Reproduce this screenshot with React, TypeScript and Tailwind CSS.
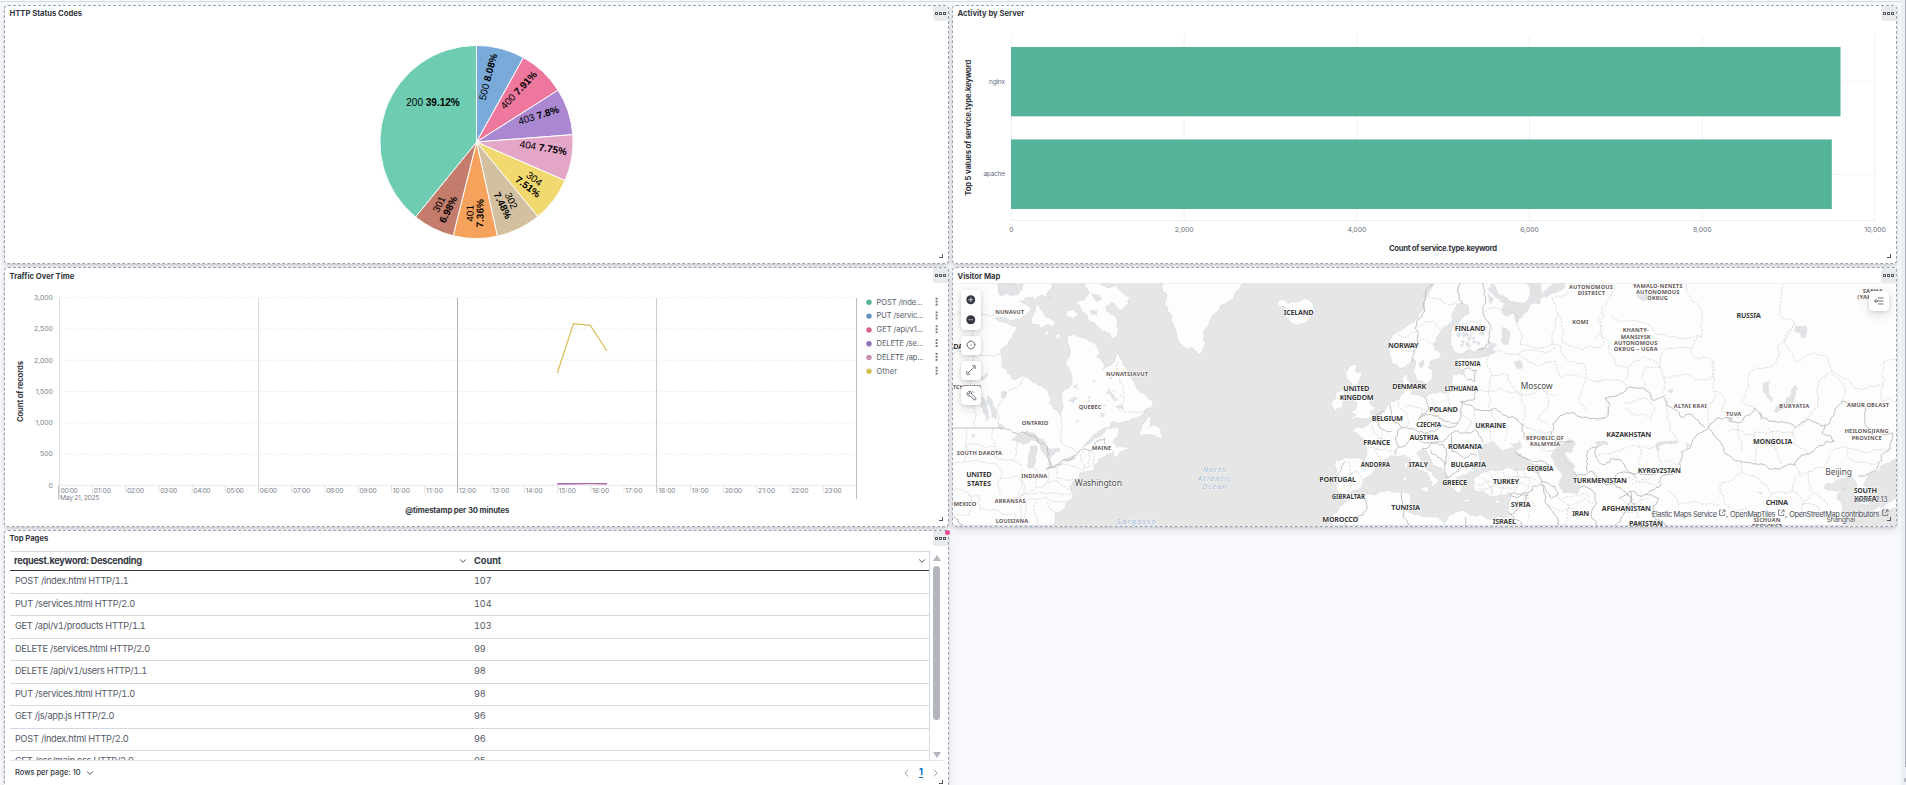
import React from 'react';

type Pt = [number, number];

/* ---------- geometry helpers ---------- */

function parse(s: string): Pt[] {
  return s.trim().split(/\s+/).map((p) => p.split(',').map(Number) as Pt);
}

const TOP = 55;
const BOTTOM = 780;
const LEFT = 23;
const RIGHT = 2855;

// Segments that run along the frame of the map stay straight.
function onFrame([x1, y1]: Pt, [x2, y2]: Pt): boolean {
  return (y1 <= TOP && y2 <= TOP) || (y1 >= BOTTOM && y2 >= BOTTOM) || (x1 <= LEFT && x2 <= LEFT) || (x1 >= RIGHT && x2 >= RIGHT);
}

// Subdivides a polyline with small deterministic offsets, for natural-looking coasts and borders.
function rough(s: string, dx = 0, amp = 0.16, closed = false): string {
  let pts = parse(s).map(([x, y]) => [x + dx, y] as Pt);
  if (closed) pts.push(pts[0]);
  for (let pass = 0; pass < 3; pass++) {
    const out: Pt[] = [];
    for (let i = 0; i < pts.length - 1; i++) {
      const [x1, y1] = pts[i];
      const [x2, y2] = pts[i + 1];
      out.push([x1, y1]);
      const len = Math.hypot(x2 - x1, y2 - y1);
      if (len < 7 || onFrame(pts[i], pts[i + 1])) continue;
      const n = Math.sin(x1 * 12.9898 + y1 * 78.233 + i * 3.7) * 43758.5453;
      const r = ((n - Math.floor(n) - 0.5) * 2 * amp * Math.min(len, 60)) / len;
      out.push([(x1 + x2) / 2 - (y2 - y1) * r, (y1 + y2) / 2 + (x2 - x1) * r]);
    }
    out.push(pts[pts.length - 1]);
    pts = out;
  }
  return 'M' + pts.map(([x, y]) => `${x.toFixed(1)} ${y.toFixed(1)}`).join('L') + (closed ? 'Z' : '');
}

/* ---------- panel shell ---------- */

function Panel({ title, dot, low, children }: { title: string; dot?: boolean; low?: boolean; children: React.ReactNode }) {
  return (
    <section className="relative flex flex-col rounded-[4px] border border-dashed border-[#98a2b3] bg-white shadow-[0_1px_2px_rgba(0,0,0,0.08),0_2px_4px_rgba(0,0,0,0.06),0_5px_9px_rgba(0,0,0,0.07)]">
      <header className="flex h-[15px] shrink-0 items-start justify-between">
        <h2 className={`pl-[4.5px] text-[7.65px] leading-[11px] font-bold text-[#343741] ${low ? 'pt-[3px]' : 'pt-[2px]'}`}>{title}</h2>
        <button className="flex h-[15px] w-[15px] items-center justify-center gap-px rounded-bl-[3px] bg-[#e9eaec]">
          {[0, 1, 2].map((i) => (
            <span key={i} className="h-[3px] w-[3px] border border-[#5a5d66]" />
          ))}
        </button>
      </header>
      <div className="min-h-0 flex-1">{children}</div>
      <span className="absolute right-[5px] bottom-[5px] h-1 w-1 border-r border-b border-[#515661]" />
      {dot && <span className="absolute -top-[1px] -right-[2px] h-[5px] w-[5px] rounded-full bg-[#f04e98]" />}
    </section>
  );
}

/* ---------- pie ---------- */

const slices = [
  { v: 8.08, c: '#79aad9' },
  { v: 7.91, c: '#ee789d' },
  { v: 7.8, c: '#a987d1' },
  { v: 7.75, c: '#e4a6c7' },
  { v: 7.51, c: '#f1d86f' },
  { v: 7.48, c: '#d2c0a0' },
  { v: 7.36, c: '#f5a35c' },
  { v: 6.98, c: '#c47c6c' },
  { v: 39.12, c: '#6dccb1' },
];

const pieLabels: { x: number; y: number; r: number; n?: string; b?: string }[] = [
  { x: 433, y: 102.5, r: 0, n: '200', b: '39.12%' },
  { x: 488, y: 76.8, r: -75.5, n: '500', b: '8.08%' },
  { x: 518.7, y: 90, r: -46.7, n: '400', b: '7.91%' },
  { x: 538.5, y: 115.3, r: -17.5, n: '403', b: '7.8%' },
  { x: 543.3, y: 147.7, r: 9.6, n: '404', b: '7.75%' },
  { x: 534.3, y: 178.7, r: 37, n: '304' },
  { x: 528, y: 186.7, r: 37, b: '7.51%' },
  { x: 511.3, y: 200.7, r: 64, n: '302' },
  { x: 502.7, y: 205.5, r: 64, b: '7.48%' },
  { x: 470, y: 213.3, r: -89.2, n: '401' },
  { x: 480, y: 213.3, r: -89.2, b: '7.36%' },
  { x: 439, y: 204.3, r: -63.4, n: '301' },
  { x: 448.3, y: 209.5, r: -63.4, b: '6.98%' },
];

function Pie() {
  const cx = 476.5;
  const cy = 142;
  const R = 96.6;
  let acc = 0;
  return (
    <svg viewBox="5 21 943 242" className="block h-[242px] w-[943px] font-['Liberation_Sans',sans-serif]">
      {slices.map((s) => {
        const a = (acc / 100) * Math.PI * 2;
        acc += s.v;
        const b = (acc / 100) * Math.PI * 2;
        return (
          <path
            key={s.c}
            fill={s.c}
            stroke="#fff"
            strokeWidth="1"
            d={`M${cx} ${cy}L${cx + R * Math.sin(a)} ${cy - R * Math.cos(a)}A${R} ${R} 0 0 1 ${cx + R * Math.sin(b)} ${cy - R * Math.cos(b)}Z`}
          />
        );
      })}
      {pieLabels.map((l, i) => (
        <text key={i} transform={`translate(${l.x} ${l.y}) rotate(${l.r})`} y="3.5" fontSize="10" textAnchor="middle" fill="#000">
          {l.n}
          {l.n && l.b ? ' ' : ''}
          {l.b && <tspan fontWeight="700">{l.b}</tspan>}
        </text>
      ))}
    </svg>
  );
}

/* ---------- bar chart ---------- */

function Bars() {
  const x0 = 1011.4;
  const step = 172.72;
  return (
    <svg viewBox="953 21 943 242" className="block h-[242px] w-[943px] font-['Inter',sans-serif]">
      {[0, 1, 2, 3, 4, 5].map((i) => (
        <path key={i} d={`M${x0 + i * step} 35V220.5`} stroke="#edf0f5" strokeWidth="1" />
      ))}
      <path d={`M${x0} 220.4H1875`} stroke="#eaedf3" />
      <path d="M1840 81.5H1875M1832 174.5H1875" stroke="#f0f1f4" strokeDasharray="3 2" />
      <rect x="1011" y="47" width="829.5" height="69.3" fill="#54b399" />
      <rect x="1011" y="139.4" width="820.8" height="69.6" fill="#54b399" />
      <g fontSize="6.8" fill="#69707d">
        {['0', '2,000', '4,000', '6,000', '8,000', '10,000'].map((t, i) => (
          <text key={t} x={x0 + i * step} y="232.2" textAnchor="middle">
            {t}
          </text>
        ))}
        <text x="1005" y="83.6" textAnchor="end" fontSize="6.5" textLength="16">nginx</text>
        <text x="1005" y="176.2" textAnchor="end" fontSize="6.5" textLength="21.6">apache</text>
      </g>
      <g fontSize="7.7" fontWeight="700" fill="#343741">
        <text x="1443" y="250.8" textAnchor="middle" textLength="108">Count of service.type.keyword</text>
        <text transform="translate(971 127.7) rotate(-90)" textAnchor="middle" textLength="136">Top 5 values of service.type.keyword</text>
      </g>
    </svg>
  );
}

/* ---------- line chart ---------- */

const legend: [string, string, number][] = [
  ['POST /inde…', '#54b399', 45.8],
  ['PUT /servic…', '#6092c0', 47],
  ['GET /api/v1…', '#d36086', 46.6],
  ['DELETE /se…', '#9170b8', 46.6],
  ['DELETE /ap…', '#ca8eae', 47.2],
  ['Other', '#d6bf57', 20.4],
];

function Lines() {
  const x0 = 59.3;
  const hour = 33.217;
  const rows = ['3,000', '2,500', '2,000', '1,500', '1,000', '500', '0'];
  return (
    <svg viewBox="5 283 943 243" className="block h-[243px] w-[943px] font-['Inter',sans-serif]">
      {rows.map((t, i) => {
        const y = 297.8 + i * 31.25;
        return (
          <g key={t}>
            <path d={`M${x0} ${y}H856`} stroke={i === 6 ? '#e8ebf2' : '#eeeff2'} strokeDasharray={i === 6 ? undefined : '3 2'} />
            <text x="52.8" y={y + 2.4} fontSize="6.8" textAnchor="end" fill="#7b818d">{t}</text>
          </g>
        );
      })}
      {Array.from({ length: 24 }, (_, h) => (
        <g key={h}>
          <path d={`M${x0 + h * hour} 485.5V493`} stroke="#d9dce1" strokeWidth="0.8" />
          <text x={x0 + h * hour + 1.2} y="492.8" fontSize="6.7" textLength="17.2" fill="#7b818d">
            {String(h).padStart(2, '0') + ':00'}
          </text>
        </g>
      ))}
      <text x="60" y="499.9" fontSize="6.7" textLength="39.3" fill="#7b818d">May 21, 2025</text>
      <path d="M58.7 485.5V499.5" stroke="#9a9da3" strokeWidth="0.8" />
      <path d="M59.5 298V485" stroke="#dedede" />
      <path d="M258.5 298V493" stroke="#dcdcdc" />
      <path d="M457.5 298V493" stroke="#acacac" strokeWidth="0.9" />
      <path d="M656.5 298V493" stroke="#cccccc" />
      <path d="M856.5 298V499.3" stroke="#bcbcbc" />
      <path d="M557.3 373L573.5 323.6L590.3 325.3L607 351" fill="none" stroke="#d6bf57" strokeWidth="1.2" />
      <path d="M557.3 483.7H607" stroke="#9170b8" strokeWidth="1.3" />
      <path d="M557.3 484.5L573 484.2L590 483.4L607 484.3" fill="none" stroke="#d36086" strokeWidth="0.7" opacity="0.8" />
      <g fontSize="7.7" fontWeight="700" fill="#343741">
        <text x="457.3" y="513.2" textAnchor="middle" textLength="104">@timestamp per 30 minutes</text>
        <text transform="translate(22.8 391.5) rotate(-90)" textAnchor="middle" textLength="61">Count of records</text>
      </g>
      {legend.map(([t, c, w], i) => {
        const y = 302.3 + i * 13.8;
        return (
          <g key={t}>
            <circle cx="869" cy={y} r="2.7" fill={c} />
            <text x="876.6" y={y + 2.2} fontSize="7.5" textLength={w} fill="#535966">{t}</text>
            {[-3, 0, 3].map((d) => (
              <rect key={d} x="935.6" y={y + d - 1.6} width="2" height="1.9" fill="#767b85" />
            ))}
          </g>
        );
      })}
    </svg>
  );
}

/* ---------- map ---------- */

const E = 990; // offset of the European sheet
const A = 1950; // offset of the Asian sheet

const land: [string, number][] = [
  ['23,55 160,55 165,92 172,75 205,55 218,88 232,75 240,55 323,55 318,72 305,85 318,98 290,92 270,105 245,98 222,110 252,125 262,135 245,150 228,160 180,160 150,160 180,172 213,184 213,200 190,235 168,262 170,300 195,330 212,345 240,335 262,352 300,372 312,385 313,415 325,432 345,450 356,425 348,395 350,382 382,352 378,325 362,300 372,275 374,250 366,215 385,208 410,220 430,228 455,242 464,265 455,275 470,290 475,315 500,300 520,262 530,285 545,310 560,340 575,372 600,385 620,405 620,430 590,452 550,470 505,470 470,495 440,520 415,548 450,518 480,495 520,490 518,515 505,532 515,548 535,548 555,548 530,560 515,578 505,572 505,560 480,575 460,585 445,605 450,612 430,620 405,625 385,650 375,665 385,690 365,715 330,745 325,782 23,782', 0],
  ['615,445 600,470 590,490 585,515 615,512 640,520 655,518 645,490 625,480 612,487 618,465', 0],
  ['272,125 285,115 300,155 332,172 322,188 308,178 290,190 280,178 260,178 265,155', 0],
  ['365,140 385,133 400,150 385,162 368,155', 0],
  ['298,208 306,198 313,205 303,215', 0],
  ['331,215 338,205 347,208 335,228', 0],
  ['420,55 432,80 418,105 392,112 408,132 430,165 450,175 475,200 505,222 515,215 518,190 500,150 482,128 500,112 515,125 530,138 550,120 556,95 535,85 515,60 490,70 465,55', 0],
  ['655,55 650,80 665,90 660,120 668,140 680,170 695,215 715,245 745,250 765,270 775,225 785,190 800,155 830,120 850,110 868,90 880,75 898,55', 0],
  // Iceland
  ['40,118 28,105 8,110 10,125 30,125 25,145 35,160 65,182 100,170 122,140 115,120 98,103 65,112', E],
  // Great Britain and Ireland
  ['220,312 240,298 248,302 240,318 260,322 255,345 248,358 268,375 275,400 302,430 285,445 298,455 270,462 225,470 245,450 228,440 245,425 240,400 225,390 230,360 218,345', E],
  ['182,378 210,370 212,398 205,425 175,442 168,420 182,400', E],
  ['205,310 213,305 210,325 204,330', E],
  // Eurasia
  ['475,55 460,90 450,118 430,150 400,180 370,200 345,225 343,265 350,295 375,312 400,300 415,280 422,300 415,320 430,350 448,354 470,348 475,320 460,310 465,290 500,272 480,255 485,220 500,195 535,170 530,150 550,118 580,125 578,150 540,180 530,215 535,260 560,268 600,262 630,250 660,262 640,275 600,278 545,285 540,300 565,315 575,340 552,325 532,335 530,380 510,388 480,385 450,400 430,390 410,388 405,355 395,325 380,345 385,385 370,405 345,415 330,435 305,460 280,480 262,490 230,500 265,520 275,555 268,590 180,585 185,620 182,660 195,685 215,692 250,675 270,640 300,610 330,585 370,575 390,572 410,592 430,615 460,635 472,655 465,672 490,642 470,620 445,600 425,565 445,552 470,590 500,610 515,640 525,660 545,685 560,680 555,655 545,640 580,625 600,622 583,602 600,592 618,595 610,565 630,540 655,530 670,545 680,560 700,555 720,550 705,535 735,528 740,545 720,560 750,580 790,600 800,615 790,625 740,615 700,608 655,615 625,622 595,640 598,680 640,692 680,690 705,685 700,720 692,782 1705,782 1700,740 1685,700 1695,680 1715,670 1690,680 1650,672 1655,655 1690,645 1715,635 1735,640 1745,660 1738,690 1748,715 1775,722 1790,705 1780,675 1765,660 1778,632 1815,610 1850,590 1870,583 1870,55', E],
  // North Africa
  ['210,712 240,700 300,690 375,683 400,685 405,715 395,735 420,750 470,755 510,777 525,750 545,742 600,755 650,765 700,755 700,782 170,782 180,745', E],
  ['385,625 395,618 396,650 384,648', E],
  ['388,600 393,592 394,612 389,612', E],
  ['432,668 465,663 458,685', E],
  ['560,707 583,705 582,712 562,711', E],
  ['658,712 680,705 672,716', E],
  // Japan
  ['830,742 850,725 885,712 908,700 908,725 880,735 850,740', A],
];

const water: [string, number][] = [
  ['160,55 205,55 220,90 200,92 185,85 165,92', 0],
  ['440,85 460,90 468,105 455,112 445,100', 0],
  ['434,138 455,138 458,152 440,150', 0],
  ['196,528 225,510 245,497 270,505 302,532 285,536 258,526 235,540 215,530', 0],
  ['255,548 275,545 270,575 267,610 252,612 248,580', 0],
  ['285,545 300,540 340,550 345,562 322,572 318,600 308,600 310,575 290,560', 0],
  ['305,612 320,602 355,595 330,611', 0],
  ['355,585 385,572 392,580 362,590', 0],
  ['108,398 122,410 130,440 128,468 115,445', 0],
  ['128,393 142,408 152,462 140,458 135,425', 0],
  ['165,478 178,485 170,495 163,490', 0],
  ['78,508 92,510 85,520', 0],
  ['168,383 185,380 180,400 170,400', 0],
  ['370,408 385,398 398,402 385,415', 0],
  ['490,375 500,385 512,405 500,400', 0],
  ['468,445 480,450 470,460', 0],
  ['510,425 528,420 522,440', 0],
  ['108,335 130,322 125,335 112,348', 0],
  ['45,260 70,255 60,268', 0],
  // White Sea and Barents coast
  ['648,55 670,88 700,105 740,115 760,105 765,75 752,55 802,55 800,85 812,95 790,118 765,120 745,150 722,172 720,140 695,155 680,140 695,115 665,100 640,75', E],
  ['805,85 820,68 840,55 872,55 860,75 835,85 815,100', E],
  ['680,190 705,205 700,240 682,235', E],
  ['640,228 665,240 655,262 632,255', E],
  ['720,290 740,290 740,312 724,308', E],
  ['640,85 655,100 650,120 642,105', E],
  ['445,285 432,300 440,310', E],
  // Caspian
  ['835,558 850,535 885,525 902,535 893,560 872,560 883,590 897,600 893,620 915,640 907,688 870,685 850,662 862,635 842,605 830,580', E],
  ['1085,90 1115,85 1140,92 1120,105 1095,102', E],
  // Baikal and lakes
  ['602,360 607,370 600,395 575,430 545,445 538,440 570,415 590,390', A],
  ['508,352 525,350 520,370 532,400 530,412 518,400', A],
  ['600,185 635,185 633,215 620,222 615,205 600,200', A],
  ['182,540 210,530 247,528 246,535 200,540 190,560', A],
  ['490,445 500,442 497,465', A],
  ['395,460 415,458 412,470 400,472', A],
  ['218,380 235,375 230,385', A],
  ['270,535 285,540 278,552', A],
  ['485,682 500,682 497,690', A],
  ['0,535 30,530 40,538 10,545', A],
];

const speckles: [number, number, number, number][] = [];
for (let i = 0; i < 46; i++) {
  const f = (k: number) => {
    const n = Math.sin(i * 91.7 + k * 37.3) * 9973.13;
    return n - Math.floor(n);
  };
  if (i < 14) speckles.push([485 + f(1) * 50, 375 + f(2) * 60, 2 + f(3) * 5, 1.5 + f(4) * 3]);
  else if (i < 24) speckles.push([375 + f(1) * 150, 340 + f(2) * 170, 3 + f(3) * 6, 1.5 + f(4) * 3]);
  else speckles.push([E + 548 + f(1) * 75, 200 + f(2) * 42, 2 + f(3) * 6, 2 + f(4) * 6]);
}

const borders: [string, number][] = [
  ['23,490 162,490', 0],
  ['162,490 200,500 240,505 275,520 308,550 318,600 305,612 350,590 385,575 400,560 440,558 465,525 480,520 482,540', 0],
  ['23,755 40,765 55,782', 0],
  ['558,55 562,118', E],
  ['475,60 445,120 420,190 425,250 412,290', E],
  ['622,55 632,100 630,160 650,190 640,225 610,255', E],
  ['565,315 605,318 600,350 575,345', E],
  ['530,375 570,360 605,370 600,400 560,410 555,440', E],
  ['448,398 455,440 430,465', E],
  ['345,420 350,450 380,490 360,520 370,545 360,570', E],
  ['330,440 300,465 350,500', E],
  ['430,465 460,450 510,470 550,470 560,440', E],
  ['380,490 440,500 480,500 500,480 550,475', E],
  ['370,545 410,520 450,535 490,530 530,505 550,500', E],
  ['555,410 600,435 660,430 700,460 745,480 745,520', E],
  ['530,510 530,560 560,575 605,570', E],
  ['550,500 600,495 625,535', E],
  ['440,550 480,530 505,540 510,600 480,570 465,555', E],
  ['510,600 515,640 550,620 590,605', E],
  ['210,590 200,610 190,660', E],
  ['270,590 310,605', E],
  ['720,560 770,590 830,605', E],
  ['790,620 800,650 760,685 705,688', E],
  ['800,650 840,665 850,690 830,700 800,660', E],
  ['705,690 760,690 740,725 700,750', E],
  ['800,660 815,720 850,782', E],
  ['700,740 740,782', E],
  ['380,683 380,725 400,782', E],
  ['265,700 270,740 225,755 210,782', E],
  ['570,757 572,782', E],
  ['830,500 835,475 880,445 920,460 990,460 1000,430 990,400 1050,380 1090,370 1110,375 1130,405 1165,395 1215,455 1260,460 1290,490', E],
  ['830,500 850,530 895,530', E],
  ['937,620 937,560 970,545 970,590 990,600 1010,580 1060,620 1085,640', E],
  ['897,620 950,620 970,650 1020,660 1060,690 1080,720', E],
  ['915,670 960,690 965,782', E],
  ['340,490 305,510 285,550 258,562 255,610 200,635 190,655', A],
  ['340,490 365,460 430,475 480,430 500,460 560,470 600,490 650,470 705,475', A],
  ['340,490 380,540 440,590 490,600 545,612 600,600 630,570 670,545 718,530 680,505 690,480', A],
  ['705,475 720,440 740,410 790,412 810,470 850,500 893,505 885,550 860,570 850,600 790,635', A],
  ['60,640 110,625 150,630 200,610', A],
  ['70,700 110,680 150,690 200,655', A],
  ['105,680 100,720 60,782', A],
  ['150,690 190,700 170,750 215,782', A],
];

const minor: [string, number][] = [
  ['23,268 165,268', 0],
  ['162,490 163,415 240,335', 0],
  ['346,450 350,535 395,560', 0],
  ['528,435 610,435', 0],
  ['520,290 530,360 530,435', 0],
  ['82,195 84,380 90,490', 0],
  ['23,155 150,150', 0],
  ['23,365 105,360', 0],
  ['57,490 58,590 23,592', 0],
  ['57,545 145,545', 0],
  ['145,490 155,560 150,580 205,585 232,600', 0],
  ['57,592 150,595 170,630 165,690', 0],
  ['23,680 70,682 72,750 23,755', 0],
  ['70,690 105,692 105,735 165,740', 0],
  ['165,640 215,635 240,660 225,700 170,700', 0],
  ['205,585 215,530', 0],
  ['230,612 225,700 215,782', 0],
  ['270,610 272,670 230,695', 0],
  ['305,615 300,660 272,670', 0],
  ['335,610 335,640 385,642', 0],
  ['230,692 380,688', 0],
  ['300,660 340,650 380,675', 0],
  ['240,712 330,712 365,715', 0],
  ['275,712 282,782', 0],
  ['245,712 240,782', 0],
  ['310,712 330,745', 0],
  ['340,605 395,605 415,620', 0],
  ['415,560 418,620', 0],
  ['430,560 432,605 415,608', 0],
  ['442,560 445,600', 0],
  ['165,740 210,745 215,782', 0],
  ['630,140 720,145 735,240 860,245', E],
  ['840,250 850,150 830,100 880,80', E],
  ['850,150 860,230 900,250 985,240 985,140', E],
  ['620,280 680,260 730,270 840,250', E],
  ['640,280 650,330 700,330 740,390 800,370 850,390', E],
  ['730,270 780,300 840,290 860,340', E],
  ['605,370 640,380 640,430', E],
  ['650,330 640,380 700,380 740,390', E],
  ['740,390 750,430 745,480 830,500', E],
  ['800,370 820,420 790,460 820,480', E],
  ['860,340 900,330 930,340 910,400 940,440', E],
  ['860,245 880,290 930,300 950,350 985,340', E],
  ['560,440 590,470 570,500', E],
  ['600,435 610,480 650,490 650,530', E],
  ['650,430 670,480 700,490 690,530', E],
  ['390,430 440,430 450,460', E],
  ['370,410 400,450 390,490', E],
  ['470,400 480,450 510,470', E],
  ['520,390 530,430 555,440', E],
  ['290,480 310,520 350,530', E],
  ['275,540 330,550 360,560', E],
  ['300,470 320,500 300,560 320,590', E],
  ['350,200 400,215 430,200', E],
  ['350,250 380,230 400,260 425,255', E],
  ['420,190 460,170 500,195', E],
  ['430,230 485,240', E],
  ['440,90 500,105 555,118', E],
  ['540,180 600,170 640,190', E],
  ['570,200 580,260', E],
  ['620,640 650,690', E],
  ['640,620 660,650 650,690', E],
  ['680,612 690,650 680,690', E],
  ['600,655 640,650 700,640 790,650', E],
  ['720,612 730,650 720,685', E],
  ['750,615 765,650 750,685', E],
  ['610,670 650,665 700,670 760,665', E],
  ['190,630 240,620 265,650', E],
  ['220,590 230,640 220,690', E],
  ['205,660 250,655', E],
  ['840,690 880,720 870,782', E],
  ['880,720 930,700 960,720', E],
  ['860,700 900,690 950,700', E],
  ['820,720 860,740 900,730', E],
  ['750,690 780,720 760,760', E],
  ['880,600 870,570 820,560', E],
  ['745,520 780,540 830,560', E],
  // Asia
  ['60,70 20,130 15,210 45,235 60,300 100,310', A],
  ['275,60 290,110 320,150 320,215 270,220 195,210 130,170 50,150', A],
  ['320,215 290,250 215,250 195,310 150,275 100,310 90,345', A],
  ['195,310 150,310 150,375', A],
  ['290,250 300,280 355,290 350,340 300,345 260,330 205,340 195,310', A],
  ['355,290 360,400 330,420 340,490', A],
  ['360,380 390,400 380,440 430,460', A],
  ['205,340 200,385 215,395', A],
  ['0,225 15,210', A],
  ['0,350 40,345 85,350 95,375', A],
  ['568,55 555,150 600,175 575,220 550,240 545,290 465,320 460,370 440,410 480,430', A],
  ['600,175 570,215 600,290 660,265 700,280 710,320 680,340 670,400 610,490', A],
  ['710,320 780,370 865,365 860,410 905,410', A],
  ['905,285 865,290 860,330 865,365', A],
  ['710,330 750,380 740,410', A],
  ['30,400 35,450 0,465', A],
  ['90,415 150,400 180,430 170,465 110,450 85,430', A],
  ['220,400 215,460 225,500 250,530', A],
  ['0,580 60,560 100,545 130,545 185,545', A],
  ['130,545 130,600', A],
  ['190,560 195,590 255,600', A],
  ['440,590 440,620 380,655 375,680 415,735 470,740', A],
  ['440,620 490,640 530,690 590,680 600,640 640,620 690,605', A],
  ['530,690 520,740 560,782', A],
  ['590,680 620,700 610,760', A],
  ['640,620 650,680 700,720', A],
  ['650,690 620,720 680,740', A],
  ['600,600 620,640', A],
  ['690,600 710,560 750,545 760,580 850,590', A],
  ['750,545 800,560 890,550', A],
  ['215,680 250,720 300,710 375,720', A],
  ['430,480 440,560', A],
  ['480,500 490,540 480,595', A],
  ['520,490 540,540 560,600', A],
  ['600,490 600,540 640,570', A],
  ['400,500 470,510 540,500 600,510', A],
  ['100,640 130,650 170,640', A],
  ['110,660 150,650 190,670', A],
  ['80,700 120,720 160,700', A],
  ['75,740 130,735 180,740', A],
  ['95,690 130,760', A],
  ['140,680 145,740', A],
];

type Label = [string, number, number, number, number, string];
// text, centre x, centre y, width, size, kind
const labels: Label[] = [
  ['NUNAVUT', 194, 142, 86, 16, 's'],
  ['NUNATSIAVUT', 546, 328, 126, 16, 's'],
  ['QUEBEC', 435, 428, 68, 16, 's'],
  ['ONTARIO', 270, 474, 80, 16, 's'],
  ['MAINE', 470, 549, 58, 16, 's'],
  ['SOUTH DAKOTA', 103, 566, 136, 16, 's'],
  ['INDIANA', 268, 634, 78, 16, 's'],
  ['ARKANSAS', 195, 709, 92, 16, 's'],
  ['LOUISIANA', 201, 770, 98, 16, 's'],
  ['MEXICO', 60, 718, 68, 16, 's'],
  ['TCHEWAN', 66, 367, 84, 16, 's'],
  ['UNITED', 102, 629, 76, 20, 'c'],
  ['STATES', 102, 655, 72, 20, 'c'],
  ['CANADA', 12, 245, 84, 20, 'c'],
  ['Washington', 460, 656, 142, 26, 't'],
  ['North', 808, 614, 70, 20, 'o'],
  ['Atlantic', 808, 640, 100, 20, 'o'],
  ['Ocean', 808, 665, 74, 20, 'o'],
  ['Sargasso', 574, 769, 116, 20, 'o'],
  ['ICELAND', E + 71, 144, 90, 20, 'c'],
  ['FINLAND', E + 585, 190, 92, 20, 'c'],
  ['NORWAY', E + 385, 242, 92, 20, 'c'],
  ['ESTONIA', E + 578, 298, 78, 17, 'c'],
  ['UNITED', E + 244, 371, 78, 20, 'c'],
  ['KINGDOM', E + 245, 397, 102, 20, 'c'],
  ['DENMARK', E + 403, 365, 102, 20, 'c'],
  ['LITHUANIA', E + 559, 371, 100, 18, 'c'],
  ['Moscow', E + 785, 363, 96, 25, 't'],
  ['POLAND', E + 506, 433, 86, 20, 'c'],
  ['BELGIUM', E + 337, 462, 94, 20, 'c'],
  ['CZECHIA', E + 461, 479, 74, 17, 'c'],
  ['UKRAINE', E + 647, 483, 92, 20, 'c'],
  ['AUSTRIA', E + 447, 517, 87, 20, 'c'],
  ['FRANCE', E + 305, 533, 80, 20, 'c'],
  ['ROMANIA', E + 570, 544, 102, 20, 'c'],
  ['REPUBLIC OF', E + 810, 520, 114, 16, 's'],
  ['KALMYKIA', E + 810, 537, 90, 16, 's'],
  ['ANDORRA', E + 301, 600, 88, 17, 'c'],
  ['ITALY', E + 430, 598, 58, 20, 'c'],
  ['BULGARIA', E + 580, 598, 106, 20, 'c'],
  ['GEORGIA', E + 795, 613, 80, 17, 'c'],
  ['PORTUGAL', E + 188, 644, 110, 20, 'c'],
  ['GREECE', E + 539, 654, 75, 20, 'c'],
  ['TURKEY', E + 693, 650, 78, 20, 'c'],
  ['TURKMENISTAN', E + 975, 648, 162, 20, 'c'],
  ['GIBRALTAR', E + 220, 695, 100, 17, 'c'],
  ['TUNISIA', E + 392, 728, 86, 20, 'c'],
  ['SYRIA', E + 737, 718, 60, 20, 'c'],
  ['IRAN', E + 917, 745, 51, 20, 'c'],
  ['MOROCCO', E + 196, 765, 108, 20, 'c'],
  ['ISRAEL', E + 688, 770, 70, 20, 'c'],
  ['AUTONOMOUS', E + 948, 66, 132, 16, 's'],
  ['DISTRICT', E + 949, 84, 82, 16, 's'],
  ['KOMI', E + 916, 171, 48, 16, 's'],
  ['YAMALO-NENETS', A + 188, 64, 148, 16, 's'],
  ['AUTONOMOUS', A + 188, 82, 130, 16, 's'],
  ['OKRUG', A + 188, 101, 62, 16, 's'],
  ['KHANTY-', A + 122, 197, 78, 16, 's'],
  ['MANSIYSK', A + 122, 216, 90, 16, 's'],
  ['AUTONOMOUS', A + 122, 234, 130, 16, 's'],
  ['OKRUG – UGRA', A + 122, 253, 132, 16, 's'],
  ['RUSSIA', A + 461, 152, 73, 20, 'c'],
  ['SAKHA', A + 833, 79, 60, 16, 's'],
  ['(YAKUTIA)', A + 833, 98, 92, 16, 's'],
  ['ALTAI KRAI', A + 286, 423, 99, 16, 's'],
  ['TUVA', A + 416, 448, 46, 16, 's'],
  ['BURYATIA', A + 598, 424, 90, 16, 's'],
  ['AMUR OBLAST', A + 819, 422, 126, 16, 's'],
  ['HEILONGJIANG', A + 815, 500, 132, 16, 's'],
  ['PROVINCE', A + 815, 519, 90, 16, 's'],
  ['KAZAKHSTAN', A + 101, 508, 135, 20, 'c'],
  ['MONGOLIA', A + 533, 530, 118, 20, 'c'],
  ['KYRGYZSTAN', A + 193, 616, 130, 20, 'c'],
  ['Beijing', A + 731, 621, 80, 25, 't'],
  ['SOUTH', A + 811, 677, 70, 20, 'c'],
  ['KOREA', A + 811, 702, 68, 20, 'c'],
  ['CHINA', A + 546, 713, 67, 20, 'c'],
  ['AFGHANISTAN', A + 94, 730, 148, 20, 'c'],
  ['PAKISTAN', A + 153, 775, 102, 20, 'c'],
  ['SICHUAN', A + 516, 765, 80, 16, 's'],
  ['PROVINCE', A + 516, 784, 90, 16, 's'],
  ['Shanghai', A + 738, 765, 86, 22, 't'],
];

const kinds: Record<string, { fill: string; weight: number; style?: string; halo: string; scale: number }> = {
  s: { fill: '#655959', weight: 700, halo: '#fff', scale: 1.08 },
  c: { fill: '#3b3b3b', weight: 700, halo: '#fff', scale: 1.1 },
  t: { fill: '#4c4c4c', weight: 400, halo: '#ffffffcc', scale: 1 },
  o: { fill: '#9fb8da', weight: 400, style: 'italic', halo: '#f2f2f2', scale: 1.12 },
};

const EXT = 'M2.6 0.6H0.6V6.4H6.2V4.3M4 0.5H6.5V3M6.4 0.6L3 4';

function MapTool({ children, className = '' }: { children: React.ReactNode; className?: string }) {
  return (
    <div className={`flex w-5 flex-col items-center justify-around rounded-[4px] bg-white shadow-[0_1px_4px_rgba(0,0,0,0.14),0_4px_12px_rgba(0,0,0,0.1)] ${className}`}>
      {children}
    </div>
  );
}

function WorldMap() {
  return (
    <div className="relative h-[243px] w-[943px] overflow-hidden rounded-b-[3px]">
      <svg viewBox="953 283.3 943 243" className="block h-[243px] w-[943px] font-['Noto_Sans',sans-serif]">
        <g transform="translate(945 265) scale(0.33333)">
          <rect x="0" y="50" width="2880" height="760" fill="#e6e6e6" />
          {land.map(([p, dx], i) => (
            <path key={i} d={rough(p, dx, 0.2, true)} fill="#fdfdfd" stroke="#cdd6e0" strokeWidth="1.6" />
          ))}
          {water.map(([p, dx], i) => (
            <path key={i} d={rough(p, dx, 0.2, true)} fill="#e2e3e5" stroke="#cdd6e0" strokeWidth="1.2" />
          ))}
          {speckles.map(([x, y, rx, ry], i) => (
            <ellipse key={i} cx={x} cy={y} rx={rx} ry={ry} transform={`rotate(-30 ${x} ${y})`} fill="#dfe3e8" />
          ))}
          {minor.map(([p, dx], i) => (
            <path key={i} d={rough(p, dx, 0.18)} fill="none" stroke="#cecece" strokeWidth="2" strokeDasharray="8 3" />
          ))}
          {borders.map(([p, dx], i) => (
            <path key={i} d={rough(p, dx, i === 0 ? 0 : 0.22)} fill="none" stroke="#b0b0b0" strokeWidth="2.4" />
          ))}
          {labels.map(([t, x, y, w, size, kind], i) => (
            <text
              key={i}
              x={x}
              y={y + size * 0.36 * kinds[kind].scale}
              fontSize={size * kinds[kind].scale}
              textAnchor="middle"
              textLength={w}
              fill={kinds[kind].fill}
              fontWeight={kinds[kind].weight}
              fontStyle={kinds[kind].style}
              stroke={kinds[kind].halo}
              strokeWidth="3.5"
              strokeLinejoin="round"
              paintOrder="stroke"
            >
              {t}
            </text>
          ))}
        </g>
      </svg>

      <div className="absolute top-[7px] left-2 flex flex-col gap-[6px]">
        <MapTool className="h-[39.5px]">
          <svg viewBox="0 0 10 10" className="h-[9.5px] w-[9.5px]">
            <circle cx="5" cy="5" r="4.7" fill="#343741" />
            <path d="M5 2.4V7.6M2.4 5H7.6" stroke="#c9ccd3" />
          </svg>
          <svg viewBox="0 0 10 10" className="h-[9.5px] w-[9.5px]">
            <circle cx="5" cy="5" r="4.7" fill="#343741" />
            <path d="M2.4 5H7.6" stroke="#a4a8b1" />
          </svg>
        </MapTool>
        <MapTool className="h-[19px]">
          <svg viewBox="0 0 10 10" className="h-[10px] w-[10px]" fill="none" stroke="#4a4e58" strokeWidth="0.8">
            <circle cx="5" cy="5" r="3.8" strokeDasharray="4.6 1.37" strokeDashoffset="-0.7" />
            <path d="M5 0.3V2M5 8V9.7M0.3 5H2M8 5H9.7M4.4 5H5.6" />
          </svg>
        </MapTool>
        <MapTool className="h-[19px]">
          <svg viewBox="0 0 10 10" className="h-[10px] w-[10px]" fill="none" stroke="#4a4e58" strokeWidth="0.8">
            <path d="M2 8L8 2M6 0.8H9.2V4M0.8 6V9.2H4" />
          </svg>
        </MapTool>
        <MapTool className="h-[19px]">
          <svg viewBox="0 0 11 11" className="h-[11px] w-[11px]" fill="none" stroke="#4a4e58" strokeWidth="0.8">
            <path d="M1 4.2A2.4 2.4 0 0 1 1.3 2.6L2.8 4L4 2.9L2.7 1.4A2.5 2.5 0 0 1 5.8 4.2L9.8 8A1.3 1.3 0 0 1 8 9.8L4.2 5.9A2.5 2.5 0 0 1 1 4.2M6.5 1.2L8 2.7M8.3 8.2H8.6" />
          </svg>
        </MapTool>
      </div>

      <div className="absolute top-[7.5px] right-[7px]">
        <MapTool className="h-5">
          <svg viewBox="0 0 10 8" className="h-[8px] w-[10px]" fill="none" stroke="#4a4e58" strokeWidth="0.8">
            <path d="M4 1H9.5M3 4H9.5M4 7H9.5M2.6 2L0.6 4L2.6 6M0.6 4H4" />
          </svg>
        </MapTool>
      </div>

      <svg
        viewBox="0 0 240 28"
        className="absolute right-[7px] bottom-[3px] h-[28px] w-[240px] font-['Inter',sans-serif]"
        fontSize="7.4"
        fill="#454a56"
        stroke="#ffffff99"
        strokeWidth="0.8"
        paintOrder="stroke"
      >
        <text x="205" y="6.8" textLength="33.5" fontSize="7">zoom: 2.13</text>
        <text x="3" y="21.6" textLength="65">Elastic Maps Service</text>
        <text x="77" y="21.6">,</text>
        <text x="81" y="21.6" textLength="45.5">OpenMapTiles</text>
        <text x="136" y="21.6">,</text>
        <text x="140.3" y="21.6" textLength="90">OpenStreetMap contributors</text>
        {[70, 129, 233].map((x) => (
          <path key={x} transform={`translate(${x} 14.5) scale(0.93)`} d={EXT} fill="none" stroke="#535966" strokeWidth="0.8" />
        ))}
      </svg>
    </div>
  );
}

/* ---------- table ---------- */

const rows: [string, number][] = [
  ['POST /index.html HTTP/1.1', 107],
  ['PUT /services.html HTTP/2.0', 104],
  ['GET /api/v1/products HTTP/1.1', 103],
  ['DELETE /services.html HTTP/2.0', 99],
  ['DELETE /api/v1/users HTTP/1.1', 98],
  ['PUT /services.html HTTP/1.0', 98],
  ['GET /js/app.js HTTP/2.0', 96],
  ['POST /index.html HTTP/2.0', 96],
  ['GET /css/main.css HTTP/2.0', 95],
];

function Chevron() {
  return (
    <svg viewBox="0 0 8 6" className="h-[6px] w-[8px] shrink-0" fill="none" stroke="#343741" strokeWidth="0.9">
      <path d="M1.2 1.5L4 4.3L6.8 1.5" />
    </svg>
  );
}

function TopPages() {
  return (
    <div className="flex h-[242px] flex-col pt-[5px] pr-[5px] pl-[5px]">
      <div className="flex h-[209.5px] overflow-hidden border-b border-[#e3e6ee]">
        <div className="flex w-[920px] flex-col border-t border-r border-[#d3dae6]">
          <div className="flex h-[19px] shrink-0 border-b border-[#343741] text-[9.2px] leading-[18px] font-bold tracking-[-0.27px] text-[#343741]">
            <div className="flex w-[460px] items-center justify-between pr-[3.5px] pl-[4px]">
              <span>request.keyword: Descending</span>
              <Chevron />
            </div>
            <div className="flex flex-1 items-center justify-between pr-[3px] pl-[4px]">
              <span className="tracking-normal">Count</span>
              <Chevron />
            </div>
          </div>
          {rows.map(([t, n]) => (
            <div key={t} className="flex h-[22.55px] shrink-0 border-b border-[#d3dae6] text-[9.2px] leading-[20px] text-[#535966] tabular-nums">
              <span className="w-[460px] pl-[5px] tracking-[-0.26px]">{t}</span>
              <span className="pl-[4px] tracking-[-0.1px]">{n}</span>
            </div>
          ))}
        </div>
        <div className="flex flex-1 flex-col items-center pt-[3.5px] pb-[2px]">
          <svg viewBox="0 0 8 6" className="h-[6px] w-[8px]">
            <path d="M4 0L8 6H0Z" fill="#b2b5be" />
          </svg>
          <div className="mt-[5px] h-[154px] w-[7px] rounded-full bg-[#b2b5be]" />
          <div className="flex-1" />
          <svg viewBox="0 0 8 6" className="h-[6px] w-[8px]">
            <path d="M4 6L8 0H0Z" fill="#b2b5be" />
          </svg>
        </div>
      </div>
      <div className="flex h-[24px] items-center justify-between pr-[5px] pl-[5px]">
        <div className="flex items-center gap-[5px] text-[7.5px] font-medium text-[#343741]">
          <span>Rows per page: 10</span>
          <Chevron />
        </div>
        <div className="flex items-center gap-[10px] text-[9.3px] font-bold text-[#0071c2]">
          <svg viewBox="0 0 5 8" className="h-[8px] w-[5px]" fill="none" stroke="#98a2b3">
            <path d="M4.3 0.5L0.8 4L4.3 7.5" />
          </svg>
          <span className="border-b border-[#0071c2] leading-[10px]">1</span>
          <svg viewBox="0 0 5 8" className="h-[8px] w-[5px]" fill="none" stroke="#98a2b3">
            <path d="M0.7 0.5L4.2 4L0.7 7.5" />
          </svg>
        </div>
      </div>
    </div>
  );
}

/* ---------- page ---------- */

export default function App() {
  return (
    <div className="flex h-[785px] w-[1906px] overflow-hidden bg-[#f7f9fd] font-['Inter',sans-serif]">
      <main className="w-[1901px] shrink-0">
        <div className="h-[2px] border-b border-[#d3dae6]" />
        <div className="grid grid-cols-[945px_945px] grid-rows-[259px_260px_260px] gap-[3px] pt-[3px] pl-1">
          <Panel title="HTTP Status Codes">
            <Pie />
          </Panel>
          <Panel title="Activity by Server">
            <Bars />
          </Panel>
          <Panel title="Traffic Over Time" low>
            <Lines />
          </Panel>
          <Panel title="Visitor Map" low>
            <WorldMap />
          </Panel>
          <Panel title="Top Pages" dot>
            <TopPages />
          </Panel>
        </div>
      </main>
      <div className="flex flex-1 flex-col items-end bg-[#eceff5]">
        <div className="h-[767px] w-px bg-[#a9adb7]" />
        <div className="mt-[11px] h-[4px] w-[2px] rounded-l-full bg-[#a9adb7]" />
      </div>
    </div>
  );
}
